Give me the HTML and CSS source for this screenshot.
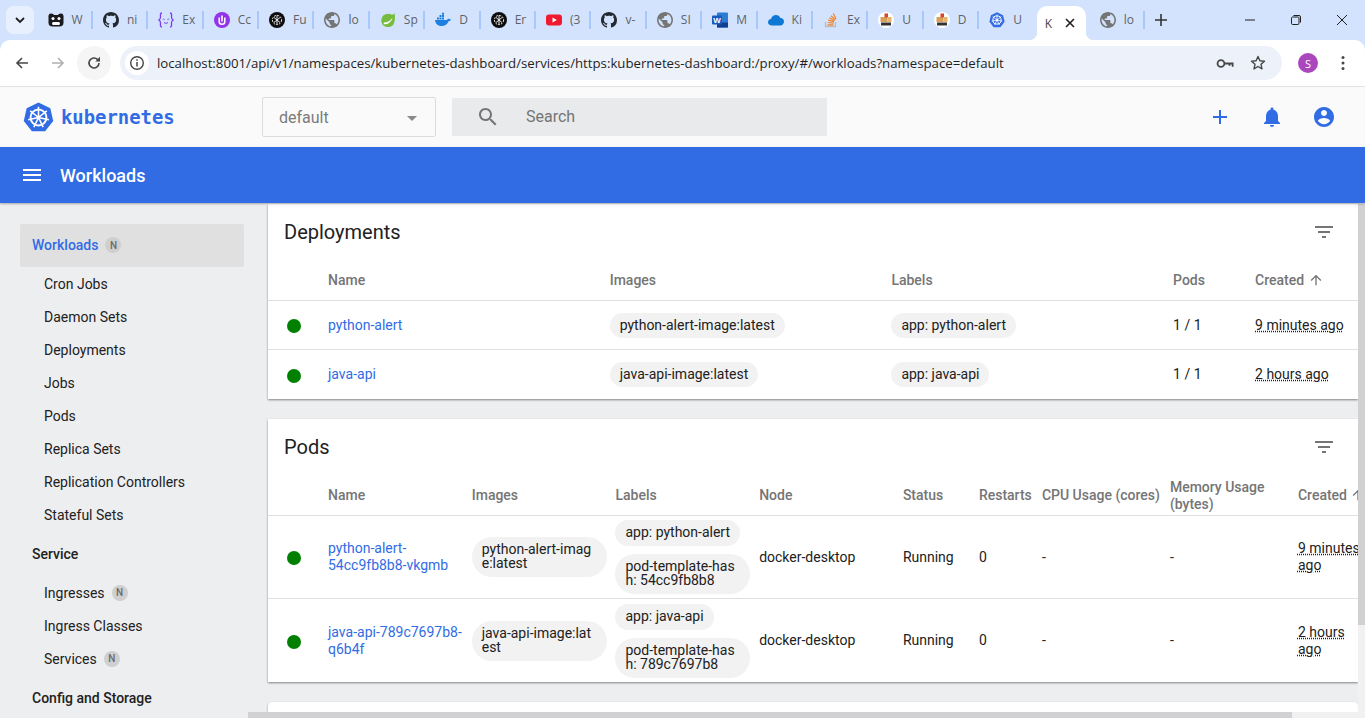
FILE: index.html

```html
<!DOCTYPE html>

<html>
    <head>
        <title>Kubernetes Dashboard</title>
        <link rel="stylesheet" href="styles.css">
    </head>
    <body>
        <svg class="defs" width="0" height="0">
            <symbol id="i_github" viewBox="0 0 16 16"><path d="M8 0C3.58 0 0 3.58 0 8c0 3.54 2.29 6.53 5.47 7.59.4.07.55-.17.55-.38 0-.19-.01-.82-.01-1.49-2.01.37-2.53-.49-2.69-.94-.09-.23-.48-.94-.82-1.13-.28-.15-.68-.52-.01-.53.63-.01 1.08.58 1.23.82.72 1.21 1.87.87 2.33.66.07-.52.28-.87.51-1.07-1.78-.2-3.64-.89-3.64-3.95 0-.87.31-1.59.82-2.15-.08-.2-.36-1.02.08-2.12 0 0 .67-.21 2.2.82.64-.18 1.32-.27 2-.27.68 0 1.36.09 2 .27 1.53-1.04 2.2-.82 2.2-.82.44 1.1.16 1.92.08 2.12.51.56.82 1.27.82 2.15 0 3.07-1.87 3.75-3.65 3.95.29.25.54.73.54 1.48 0 1.07-.01 1.93-.01 2.2 0 .21.15.46.55.38A8.013 8.013 0 0016 8c0-4.42-3.58-8-8-8z" fill="#24292f"/></symbol>
            <symbol id="i_globe" viewBox="2 2 20 20"><path d="M12 2C6.48 2 2 6.48 2 12s4.48 10 10 10 10-4.48 10-10S17.52 2 12 2zm-1 17.93c-3.95-.49-7-3.85-7-7.93 0-.62.08-1.21.21-1.79L9 15v1c0 1.1.9 2 2 2v1.93zm6.9-2.54c-.26-.81-1-1.39-1.9-1.39h-1v-3c0-.55-.45-1-1-1H8v-2h2c.55 0 1-.45 1-1V7h2c1.1 0 2-.9 2-2v-.41c2.93 1.19 5 4.06 5 7.41 0 2.08-.8 3.97-2.1 5.39z" fill="#757575"/></symbol>
            <symbol id="i_openai" viewBox="0 0 16 16"><circle cx="8" cy="8" r="8" fill="#0d0d0d"/><g fill="none" stroke="#e8e8e8" stroke-width="1"><circle cx="8" cy="8" r="4.6" stroke-dasharray="2 1"/><path d="M5 5.5l6 5M11 5.5l-6 5M8 3.5v9"/></g></symbol>
            <symbol id="i_strata" viewBox="0 0 16 16"><circle cx="8" cy="8" r="8" fill="#fff"/><rect x="2.5" y="5" width="7" height="5" fill="#d9a05b"/><rect x="6.5" y="1.5" width="3.5" height="4" fill="#d8452e"/><rect x="9.5" y="5" width="4" height="5" fill="#e7b36a"/><path d="M3 10.5h10v3H3z" fill="#333"/></symbol>
            <symbol id="i_kube" viewBox="0 0 32 32">
                <path d="M16 0.6l12.2 5.9 3 13.2-8.4 10.6H9.2L.8 19.7l3-13.2z" fill="#326ce5"/>
                <g fill="none" stroke="#fff">
                    <circle cx="16" cy="16" r="8.2" stroke-width="2"/>
                    <path stroke-width="1.6" d="M16 16V5M16 16l8.6-6.9M16 16l10.7 2.4M16 16l4.8 9.9M16 16l-4.8 9.9M16 16L5.3 18.4M16 16L7.4 9.1"/>
                </g>
                <circle cx="16" cy="16" r="2" fill="#fff"/>
            </symbol>
        </svg>

        <div class="browser_top">
            <!-- Browser tabs -->
            <div class="tabstrip">
                <div class="tab_search"><svg width="12" height="12" viewBox="0 0 12 12"><path d="M2 4l4 4 4-4" fill="none" stroke="#1f1f1f" stroke-width="1.8"/></svg></div>
                <div class="tabs">
                    <div class="tab"><svg class="fav" viewBox="0 0 16 16"><path d="M3 1.5c2 0 2.5 1 3 1.5h4c.5-.5 1-1.5 3-1.5s3 2 2.5 4.5v5c0 2.5-2 3.5-4 3.5H4.500c-2 0-4-1-4-3.500v-5C0 3.500 1 1.500 3 1.500z" fill="#1b1b1f"/><circle cx="5" cy="6.5" r="1.5" fill="#fff"/><circle cx="11" cy="6.5" r="1.5" fill="#fff"/><rect x="4" y="10" width="8" height="3" rx="1.5" fill="#fff"/></svg><span class="tab_title">W</span></div>
                    <div class="tab"><svg class="fav"><use href="#i_github"/></svg><span class="tab_title">ni</span></div>
                    <div class="tab"><svg class="fav" viewBox="0 0 16 16"><path d="M4 1C2 1 2.5 3 2.5 5S2 7.5.8 8c1.2.5 1.7 1 1.7 3s-.5 4 1.500 4M12 1c2 0 1.500 2 1.500 4s.5 2.500 1.700 3c-1.200.5-1.700 1-1.700 3s.5 4-1.500 4" fill="none" stroke="#7c3aed" stroke-width="1.3"/><path d="M5 7.5c.5-.8 1-.8 1.5 0M9.5 7.5c.5-.8 1-.8 1.5 0M6 10.500c1.200 1 2.800 1 4 0" fill="none" stroke="#7c3aed"/></svg><span class="tab_title">Ex</span></div>
                    <div class="tab"><svg class="fav" viewBox="0 0 16 16"><circle cx="8" cy="8" r="8" fill="#9333ea"/><path d="M5.2 5.500v4.200c0 1.500 1.200 2.500 2.800 2.500s2.800-1 2.800-2.500V5.500" fill="none" stroke="#fff" stroke-width="1.5"/><rect x="7.2" y="3.5" width="1.6" height="6" fill="#fff"/></svg><span class="tab_title">Cc</span></div>
                    <div class="tab"><svg class="fav"><use href="#i_openai"/></svg><span class="tab_title">Fu</span></div>
                    <div class="tab"><svg class="fav"><use href="#i_globe"/></svg><span class="tab_title">lo</span></div>
                    <div class="tab"><svg class="fav" viewBox="0 0 16 16"><path d="M14.500 1C14 2 13 2.500 12 2.700 9 1 4.500 1.500 2.500 4.500.5 7.500 1.200 11.500 3.500 13.500c3 2.500 7.500 2 9.800-.8C15 10 15.500 5 14.500 1z" fill="#77bc3f"/><path d="M3.500 12c4.500 1 8-2 9-6.500-1.500 3-5 5-8.500 5" fill="#fff"/></svg><span class="tab_title">Sp</span></div>
                    <div class="tab"><svg class="fav" viewBox="0 0 16 16"><path d="M0 8h12c.5-1 1.500-1.500 2.500-1 .5.200 1 .5 1.500.8-.5 1-1.500 1.500-2.500 1.400C12.500 12 10 14 6.500 14 2.500 14 .5 11.500 0 8z" fill="#1d7fe0"/><path d="M2 5.500h2v2H2zM4.500 5.500h2v2h-2zM7 5.500h2v2H7zM4.500 3h2v2h-2zM7 3h2v2H7zM7 .8h2v2H7z" fill="#1d7fe0"/></svg><span class="tab_title">D</span></div>
                    <div class="tab"><svg class="fav"><use href="#i_openai"/></svg><span class="tab_title">Er</span></div>
                    <div class="tab"><svg class="fav" viewBox="0 0 16 16"><rect y="2.5" width="16" height="11" rx="3" fill="#f01a2e"/><path d="M6.500 5.500L10.800 8l-4.300 2.500z" fill="#fff"/></svg><span class="tab_title">(3</span></div>
                    <div class="tab"><svg class="fav"><use href="#i_github"/></svg><span class="tab_title">v-</span></div>
                    <div class="tab"><svg class="fav"><use href="#i_globe"/></svg><span class="tab_title">SI</span></div>
                    <div class="tab"><svg class="fav" viewBox="0 0 16 16"><rect x="5" y=".5" width="11" height="15" rx="1" fill="#2b7cd3"/><rect x="5" y="10.5" width="11" height="5" fill="#103f91"/><rect y="3.5" width="10" height="9" rx="1" fill="#185abd"/><text x="5" y="10.8" font-size="8" font-weight="bold" fill="#fff" text-anchor="middle" font-family="Liberation Sans">W</text></svg><span class="tab_title">M</span></div>
                    <div class="tab"><svg class="fav" viewBox="0 0 16 16"><path d="M4 13.500c-2.500 0-4-1.500-4-3.200 0-1.800 1.300-3 3-3.200C3.700 4.500 5.800 3 8 3c2 0 3.700 1.200 4.300 3 2-.2 3.700 1.300 3.700 3.500 0 2.300-1.600 4-3.500 4z" fill="#0f78d4"/></svg><span class="tab_title">Ki</span></div>
                    <div class="tab"><svg class="fav" viewBox="0 0 16 16"><path d="M2.500 10v4.500h10V10" fill="none" stroke="#bcbbbb" stroke-width="1.3"/><path d="M4.500 12.800h6M4.700 10.500l6 .6M5.200 8.200l5.800 1.500M6.300 5.800l5.200 3M8 3.700l4.300 4.200M10.300 1.500l2.800 5.500" fill="none" stroke="#f48024" stroke-width="1.2"/></svg><span class="tab_title">Ex</span></div>
                    <div class="tab"><svg class="fav"><use href="#i_strata"/></svg><span class="tab_title">U</span></div>
                    <div class="tab"><svg class="fav"><use href="#i_strata"/></svg><span class="tab_title">D</span></div>
                    <div class="tab tab_last"><svg class="fav"><use href="#i_kube"/></svg><span class="tab_title">U</span></div>
                    <div class="tab tab_active"><span class="tab_title">K</span><svg class="tab_close" width="10" height="10" viewBox="0 0 10 10"><path d="M1 1l8 8M9 1L1 9" stroke="#1f1f1f" stroke-width="1.6"/></svg></div>
                    <div class="tab tab_after"><svg class="fav"><use href="#i_globe"/></svg><span class="tab_title">lo</span></div>
                    <div class="tab_new"><svg width="14" height="14" viewBox="0 0 14 14"><path d="M7 1v12M1 7h12" stroke="#333" stroke-width="1.6"/></svg></div>
                </div>
                <div class="win_controls">
                    <div class="win_button"><svg width="12" height="12" viewBox="0 0 12 12"><path d="M1 6h10" stroke="#1f1f1f"/></svg></div>
                    <div class="win_button"><svg width="12" height="12" viewBox="0 0 12 12"><rect x="1.5" y="3" width="7.5" height="7.5" rx="1.2" fill="none" stroke="#1f1f1f"/><path d="M3.500 1.500h5.500a1.500 1.500 0 0 1 1.500 1.500v5.500" fill="none" stroke="#1f1f1f"/></svg></div>
                    <div class="win_button"><svg width="12" height="12" viewBox="0 0 12 12"><path d="M1 1l10 10M11 1L1 11" stroke="#1f1f1f"/></svg></div>
                </div>
            </div>

            <!-- Browser toolbar -->
            <div class="toolbar">
                <div class="nav_button"><svg width="16" height="16" viewBox="0 0 16 16"><path d="M14 8H3M8 3L3 8l5 5" fill="none" stroke="#474747" stroke-width="1.6"/></svg></div>
                <div class="nav_button"><svg width="16" height="16" viewBox="0 0 16 16"><path d="M2 8h11M8 3l5 5-5 5" fill="none" stroke="#b0b0b0" stroke-width="1.6"/></svg></div>
                <div class="nav_button nav_reload"><svg width="16" height="16" viewBox="0 0 16 16"><path d="M13 8a5 5 0 1 1-1.500-3.600L13.500 6" fill="none" stroke="#474747" stroke-width="1.6"/><path d="M14 1.800V6.500H9.300z" fill="#474747"/></svg></div>
                <div class="omnibox">
                    <div class="site_info"><svg width="16" height="16" viewBox="0 0 16 16"><circle cx="8" cy="8" r="6.3" fill="none" stroke="#474747" stroke-width="1.4"/><path d="M8 7v4.500M8 4.300v1.500" stroke="#474747" stroke-width="1.5"/></svg></div>
                    <span class="url">localhost:8001/api/v1/namespaces/kubernetes-dashboard/services/https:kubernetes-dashboard:/proxy/#/workloads?namespace=default</span>
                    <svg class="omni_icon" width="18" height="13" viewBox="0 0 20 14"><circle cx="5.5" cy="7" r="3.8" fill="none" stroke="#474747" stroke-width="2"/><path d="M9.500 7h9v3.500M15 7v2.500" fill="none" stroke="#474747" stroke-width="2"/></svg>
                    <svg class="omni_icon" width="16" height="16" viewBox="0 0 16 16"><path d="M8 1.500l1.900 4.300 4.600.4-3.500 3.100 1 4.600L8 11.500l-4 2.400 1-4.600-3.500-3.100 4.600-.4z" fill="none" stroke="#474747" stroke-width="1.4" stroke-linejoin="round"/></svg>
                </div>
                <div class="avatar">S</div>
                <svg class="kebab" width="4" height="16" viewBox="0 0 4 16"><circle cx="2" cy="2.5" r="1.5" fill="#474747"/><circle cx="2" cy="8" r="1.5" fill="#474747"/><circle cx="2" cy="13.5" r="1.5" fill="#474747"/></svg>
            </div>
        </div>

        <!-- Dashboard header -->
        <div class="header">
            <div class="brand">
                <svg class="brand_logo"><use href="#i_kube"/></svg>
                <span class="brand_name">kubernetes</span>
            </div>
            <div class="ns_select">
                <span>default</span>
                <div class="ns_caret"></div>
            </div>
            <div class="search">
                <svg width="24" height="24" viewBox="0 0 24 24"><path d="M15.500 14h-.79l-.28-.27C15.410 12.590 16 11.110 16 9.500 16 5.910 13.090 3 9.500 3S3 5.910 3 9.500 5.910 16 9.500 16c1.610 0 3.090-.59 4.230-1.570l.27.28v.79l5 4.990L20.490 19l-4.990-5zm-6 0C7.010 14 5 11.990 5 9.500S7.010 5 9.500 5 14 7.010 14 9.500 11.990 14 9.500 14z" fill="#757575"/></svg>
                <span>Search</span>
            </div>
            <div class="header_actions">
                <svg width="24" height="24" viewBox="0 0 24 24"><path d="M19 13h-6v6h-2v-6H5v-2h6V5h2v6h6v2z" fill="#326ce5"/></svg>
                <svg width="24" height="24" viewBox="0 0 24 24"><path d="M12 22c1.100 0 2-.9 2-2h-4c0 1.100.89 2 2 2zm6-6v-5c0-3.070-1.640-5.640-4.500-6.320V4c0-.83-.67-1.500-1.500-1.500s-1.500.67-1.500 1.500v.68C7.630 5.360 6 7.920 6 11v5l-2 2v1h16v-1l-2-2z" fill="#326ce5"/></svg>
                <svg width="24" height="24" viewBox="0 0 24 24"><path d="M12 2C6.480 2 2 6.480 2 12s4.480 10 10 10 10-4.480 10-10S17.520 2 12 2zm0 3c1.660 0 3 1.340 3 3s-1.340 3-3 3-3-1.340-3-3 1.340-3 3-3zm0 14.200c-2.500 0-4.710-1.280-6-3.220.03-1.990 4-3.080 6-3.080 1.990 0 5.970 1.090 6 3.080-1.290 1.940-3.500 3.220-6 3.220z" fill="#326ce5"/></svg>
            </div>
        </div>

        <div class="titlebar">
            <svg width="24" height="24" viewBox="0 0 24 24"><path d="M3 18h18v-2H3v2zm0-5h18v-2H3v2zm0-7v2h18V6H3z" fill="#fff"/></svg>
            <span>Workloads</span>
        </div>

        <div class="workspace">
            <!-- Side navigation -->
            <div class="sidenav">
                <div class="nav_group nav_selected">Workloads <span class="badge">N</span></div>
                <div class="nav_item">Cron Jobs</div>
                <div class="nav_item">Daemon Sets</div>
                <div class="nav_item">Deployments</div>
                <div class="nav_item">Jobs</div>
                <div class="nav_item">Pods</div>
                <div class="nav_item">Replica Sets</div>
                <div class="nav_item">Replication Controllers</div>
                <div class="nav_item">Stateful Sets</div>
                <div class="nav_group">Service</div>
                <div class="nav_item">Ingresses <span class="badge">N</span></div>
                <div class="nav_item">Ingress Classes</div>
                <div class="nav_item">Services <span class="badge">N</span></div>
                <div class="nav_group">Config and Storage</div>
            </div>

            <!-- Cards -->
            <div class="content">
                <div class="cards">
                    <div class="card">
                        <div class="card_title">
                            <span>Deployments</span>
                            <svg width="24" height="24" viewBox="0 0 24 24"><path d="M10 18h4v-2h-4v2zM3 6v2h18V6H3zm3 7h12v-2H6v2z" fill="#757575"/></svg>
                        </div>
                        <table class="grid grid_deploy">
                            <colgroup><col class="c_state"><col class="c_d1"><col class="c_d1"><col class="c_d1"><col class="c_d2"><col></colgroup>
                            <tr class="head">
                                <th></th><th>Name</th><th>Images</th><th>Labels</th><th>Pods</th>
                                <th>Created <svg class="sort_arrow" viewBox="0 0 24 24"><path d="M4 12l1.410 1.410L11 7.830V20h2V7.830l5.580 5.590L20 12l-8-8-8 8z" fill="#757575"/></svg></th>
                            </tr>
                            <tr class="row_d">
                                <td><div class="dot"></div></td>
                                <td><a class="link">python-alert</a></td>
                                <td><span class="chip">python-alert-image:latest</span></td>
                                <td><span class="chip">app: python-alert</span></td>
                                <td>1 / 1</td>
                                <td><span class="age">9 minutes ago</span></td>
                            </tr>
                            <tr class="row_d">
                                <td><div class="dot"></div></td>
                                <td><a class="link">java-api</a></td>
                                <td><span class="chip">java-api-image:latest</span></td>
                                <td><span class="chip">app: java-api</span></td>
                                <td>1 / 1</td>
                                <td><span class="age">2 hours ago</span></td>
                            </tr>
                        </table>
                    </div>

                    <div class="card">
                        <div class="card_title">
                            <span>Pods</span>
                            <svg width="24" height="24" viewBox="0 0 24 24"><path d="M10 18h4v-2h-4v2zM3 6v2h18V6H3zm3 7h12v-2H6v2z" fill="#757575"/></svg>
                        </div>
                        <table class="grid grid_pods">
                            <colgroup><col class="c_state"><col class="c_p1"><col class="c_p1"><col class="c_p1"><col class="c_p1"><col class="c_p2"><col class="c_p3"><col class="c_p4"><col class="c_p4"><col class="c_p5"></colgroup>
                            <tr class="head">
                                <th></th><th>Name</th><th>Images</th><th>Labels</th><th>Node</th><th>Status</th><th>Restarts</th><th>CPU Usage (cores)</th><th>Memory Usage (bytes)</th>
                                <th class="nowrap">Created <svg class="sort_arrow" viewBox="0 0 24 24"><path d="M4 12l1.410 1.410L11 7.830V20h2V7.830l5.580 5.590L20 12l-8-8-8 8z" fill="#757575"/></svg></th>
                            </tr>
                            <tr class="row_p">
                                <td><div class="dot"></div></td>
                                <td><a class="link">python-alert-54cc9fb8b8-vkgmb</a></td>
                                <td><span class="chip chip_wrap">python-alert-image:latest</span></td>
                                <td><span class="chip chip_wrap">app: python-alert</span><span class="chip chip_wrap">pod-template-hash: 54cc9fb8b8</span></td>
                                <td>docker-desktop</td>
                                <td>Running</td>
                                <td>0</td>
                                <td>-</td>
                                <td>-</td>
                                <td><span class="age">9 minutes ago</span></td>
                            </tr>
                            <tr class="row_p">
                                <td><div class="dot"></div></td>
                                <td><a class="link">java-api-789c7697b8-q6b4f</a></td>
                                <td><span class="chip chip_wrap">java-api-image:latest</span></td>
                                <td><span class="chip chip_wrap">app: java-api</span><span class="chip chip_wrap">pod-template-hash: 789c7697b8</span></td>
                                <td>docker-desktop</td>
                                <td>Running</td>
                                <td>0</td>
                                <td>-</td>
                                <td>-</td>
                                <td><span class="age">2 hours ago</span></td>
                            </tr>
                        </table>
                    </div>

                    <div class="card card_next"></div>
                </div>

                <div class="scroll_v"><div class="scroll_v_thumb"></div></div>
            </div>
        </div>
        <div class="scroll_h"><div class="scroll_h_thumb"></div></div>
    </body>
</html>
```

FILE: styles.css

```css
html, body {
    margin: 0;      padding: 0;
    height: 718px;
    overflow: hidden;
    font-family: "Roboto", sans-serif;
    font-size: 14px;
    color: #212121;
    background-color: #edeef0;
    position: relative;
}

.defs { position: absolute; }

.browser_top { background-color: #d3e3fd; }

/* Browser tabs */
.tabstrip {
    display: flex;
    align-items: flex-start;
    height: 40px;
}
.tab_search {
    display: flex;
    align-items: center;
    justify-content: center;
    width: 28px;    height: 28px;
    margin: 6px 0 0 6px;
    border-radius: 8px;
    background-color: #e9f0fd;
}
.tabs {
    display: flex;
    align-items: center;
    height: 40px;
    margin-left: 3.5px;
    width: 1140px;
}
.tab {
    display: flex;
    align-items: center;
    flex: none;
    width: 55.4px;
    height: 18px;
    padding-left: 10px;
    box-sizing: border-box;
    border-right: 2px solid #a8c7fa;
    margin-top: -1px;
}
.fav {
    width: 16px;    height: 16px;
    flex: none;
}
.tab_title {
    margin-left: 8px;
    font-family: "Open Sans", sans-serif;
    font-size: 12px;
    color: #5f6368;
}
.tab_last { border-right: none; width: 57.7px; }
.tab_active {
    position: relative;
    height: 34px;
    width: 49px;
    margin-top: 6px;
    padding-left: 8px;
    border-right: none;
    border-radius: 10px 10px 0 0;
    background-color: #ffffff;
}
/* Flared bottom corners of the open tab */
.tab_active:before, .tab_active:after {
    content: "";
    position: absolute;
    bottom: 0;
    width: 8px;     height: 8px;
}
.tab_active:before {
    left: -8px;
    background: radial-gradient(circle at 0 0, transparent 8px, #ffffff 8.5px);
}
.tab_active:after {
    right: -8px;
    background: radial-gradient(circle at 100% 0, transparent 8px, #ffffff 8.5px);
}
.tab_active .tab_title {
    margin-left: 0;
    width: 10px;
    color: #474747;
}
.tab_close { margin-left: 10px; flex: none; }
.tab_after { margin-left: 4px; }
.tab_new {
    display: flex;
    align-items: center;
    margin-left: 9px;
}
.win_controls {
    display: flex;
    margin-left: auto;
}
.win_button {
    display: flex;
    align-items: center;
    justify-content: center;
    width: 46px;    height: 40px;
}

/* Browser toolbar */
.toolbar {
    display: flex;
    align-items: center;
    height: 47px;
    padding-left: 5px;
    box-sizing: border-box;
    background-color: #ffffff;
    border-bottom: 1px solid #e3e3e3;
    border-radius: 10px 10px 0 0;
}
.nav_button {
    display: flex;
    align-items: center;
    justify-content: center;
    width: 34px;    height: 34px;
    border-radius: 50%;
    margin-right: 2px;
}
.nav_reload { background-color: #f5f5f5; margin-right: 9px; }
.omnibox {
    display: flex;
    align-items: center;
    width: 1162px;  height: 34px;
    border-radius: 17px;
    background-color: #edf2fa;
}
.site_info {
    display: flex;
    align-items: center;
    justify-content: center;
    width: 24px;    height: 24px;
    margin-left: 5px;
    border-radius: 50%;
    background-color: #ffffff;
}
.url {
    margin-left: 8px;
    font-family: "Open Sans", sans-serif;
    font-size: 13.23px;
    color: #1f1f1f;
    white-space: nowrap;
    flex: 1;
}
.omni_icon { flex: none; margin-right: 16px; }
.avatar {
    display: flex;
    align-items: center;
    justify-content: center;
    width: 20px;    height: 20px;
    margin-left: 16px;
    border-radius: 50%;
    background-color: #ab47bc;
    color: #ffffff;
    font-family: "Open Sans", sans-serif;
    font-size: 11px;
}
.kebab { margin-left: 23px; }

/* Dashboard header */
.header {
    display: flex;
    align-items: center;
    height: 60px;
    background-color: #fafafa;
}
.brand {
    display: flex;
    align-items: center;
    width: 262px;
    padding-left: 23px;
    box-sizing: border-box;
}
.brand_logo { width: 31px; height: 31px; flex: none; }
.brand_name {
    margin-left: 7px;
    font-family: "DejaVu Sans Mono", monospace;
    font-size: 18.9px;
    font-weight: bold;
    color: #326ce5;
}
.ns_select {
    display: flex;
    align-items: center;
    justify-content: space-between;
    width: 174px;   height: 40px;
    padding: 0 16px;
    box-sizing: border-box;
    border: 1px solid #dcdcdc;
    border-radius: 2px;
    font-size: 16px;
    color: #7b7b7b;
}
.ns_caret {
    width: 0;   height: 0;
    border-left: 5px solid transparent;
    border-right: 5px solid transparent;
    border-top: 5px solid #8a8a8a;
    margin-right: 2px;
    margin-top: 2px;
}
.search {
    display: flex;
    align-items: center;
    width: 375px;   height: 38px;
    margin-left: 16px;
    padding: 0 0 1px 24px;
    box-sizing: border-box;
    background-color: #e8eaeb;
    font-size: 16px;
    color: #757575;
}
.search span { margin-left: 26px; }
.header_actions {
    display: flex;
    gap: 28px;
    margin-left: auto;
    margin-right: 29px;
}

.titlebar {
    position: relative;
    z-index: 1;
    display: flex;
    align-items: center;
    height: 56px;
    padding-left: 20px;
    box-sizing: border-box;
    background-color: #326ce5;
    color: #ffffff;
    font-size: 18px;
    font-weight: 500;
    box-shadow: 0 1px 2px rgba(0, 0, 0, 0.3);
}
.titlebar span { margin-left: 16px; }

/* Side navigation */
.workspace {
    display: flex;
    height: 515px;
    overflow: hidden;
}
.sidenav {
    flex: none;
    width: 248px;
    padding: 21px 4px 0 20px;
    box-sizing: border-box;
}
.nav_group {
    display: flex;
    align-items: center;
    height: 44px;
    padding: 1px 0 0 12px;
    font-weight: 500;
    color: #212121;
}
.nav_selected {
    height: 42px;
    padding: 0 0 1px 12px;
    border-radius: 2px;
    background-color: #e0e0e0;
    color: #326ce5;
    font-weight: 500;
}
.nav_item {
    display: flex;
    align-items: center;
    height: 33px;
    padding-left: 24px;
    color: #212121;
}
.badge {
    display: inline-flex;
    align-items: center;
    justify-content: center;
    width: 16px;    height: 16px;
    margin-left: 7px;
    border-radius: 50%;
    background-color: #cfcfcf;
    color: #6b6b6b;
    font-size: 10px;
    font-weight: 500;
}

/* Cards */
.content {
    flex: 1;
    display: flex;
    min-width: 0;
    margin-top: 1px;
}
.cards {
    flex: 1;
    min-width: 0;
    padding-left: 20px;
    overflow: hidden;
}
.card {
    background-color: #ffffff;
    margin-bottom: 20px;
    box-shadow: 0 1px 2px rgba(0, 0, 0, 0.45);
}
.card_next { height: 40px; border-radius: 4px 4px 0 0; }
.card_title {
    display: flex;
    align-items: center;
    justify-content: space-between;
    height: 52px;
    padding: 4px 22px 0 16px;
    box-sizing: border-box;
    font-size: 20px;
    color: #212121;
}

.grid {
    border-collapse: collapse;
    table-layout: fixed;
}
.grid_deploy { width: 100%; }
.grid_pods { width: 1108px; }
.c_state { width: 60px; }
.c_d1 { width: 281.7px; }
.c_d2 { width: 82px; }
.c_p1 { width: 143.7px; }
.c_p2 { width: 76px; }
.c_p3 { width: 63px; }
.c_p4 { width: 128px; }
.c_p5 { width: 78px; }

.grid th {
    height: 39px;
    padding: 5px 8px 0 0;
    border-bottom: 1px solid #e0e0e0;
    font-size: 14px;
    font-weight: 500;
    line-height: 17px;
    text-align: left;
    color: #757575;
}
.nowrap { white-space: nowrap; }
.sort_arrow {
    width: 16px;    height: 16px;
    vertical-align: -3px;
}
.grid td {
    padding: 0 8px 0 0;
    border-bottom: 1px solid #e0e0e0;
    line-height: 17px;
    color: #212121;
}
.row_d td { height: 48px; }
.row_p td { height: 82px; }
.grid tr:last-child td { border-bottom: none; }
.row_d:last-child td { height: 49px; }
.row_p:last-child td { height: 83px; }
.dot {
    width: 14px;    height: 14px;
    margin: 2px 0 0 19px;
    border-radius: 50%;
    background-color: #008000;
}
.link { color: #326ce5; }
.chip {
    display: inline-block;
    padding: 5px 10px 6px;
    border-radius: 13px;
    background-color: #f2f2f2;
    line-height: 14px;
}
.chip_wrap {
    display: block;
    width: fit-content;
    max-width: 115px;
    padding: 5px 10px 7px;
    border-radius: 20px;
    word-break: break-all;
    box-sizing: content-box;
}
.chip_wrap + .chip_wrap { margin-top: 8px; }
.age { text-decoration: underline dotted; }

/* Scrollbars */
.scroll_v {
    flex: none;
    width: 7px;
    background-color: #f1f1f1;
}
.scroll_v_thumb {
    height: 421px;
    background-color: #d1d1d3;
}
.scroll_h {
    position: absolute;
    left: 248px;    right: 0;
    bottom: 0;
    height: 6px;
    background-color: #f1f1f1;
}
.scroll_h_thumb {
    width: 1044px;  height: 6px;
    background-color: #d1d1d3;
}
```
